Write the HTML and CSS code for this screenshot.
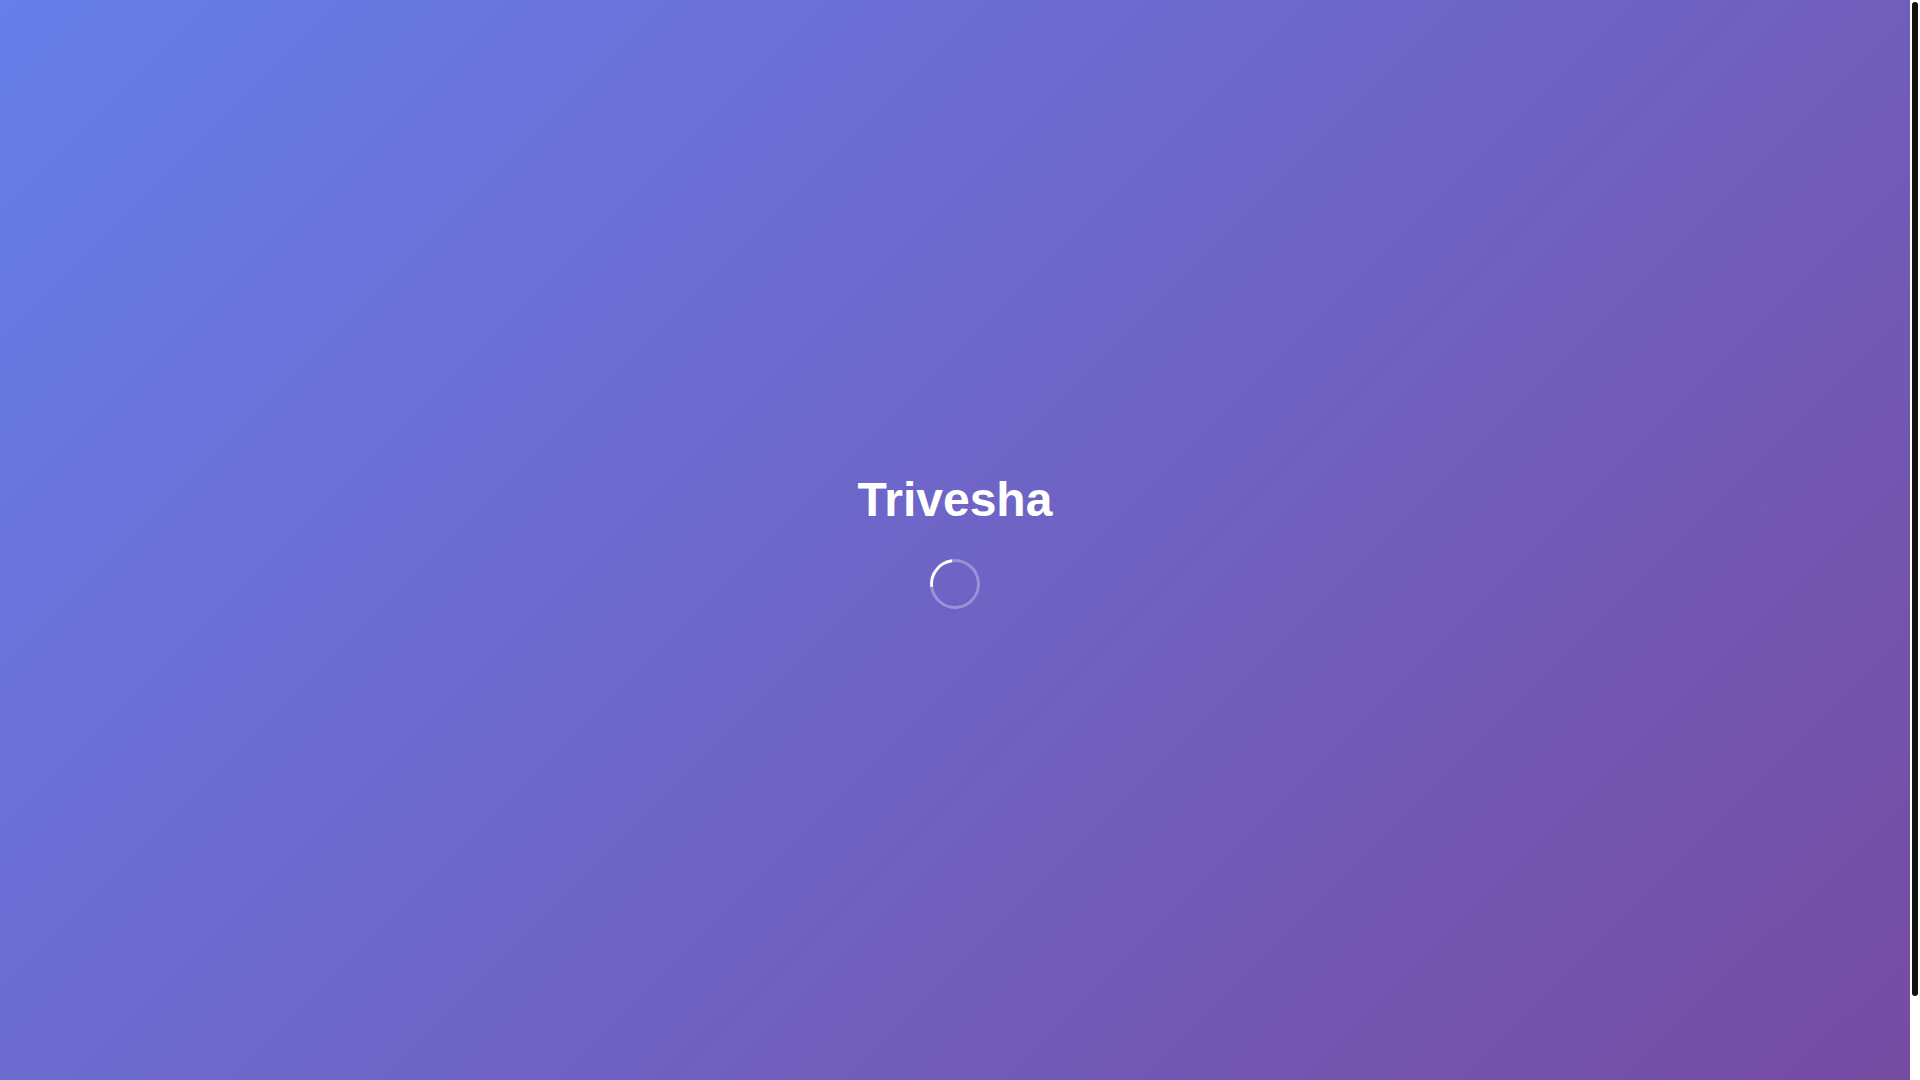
FILE: index.html
```html
<!DOCTYPE html>
<html lang="en">
<head>
<meta charset="utf-8">
<title>Trivesha</title>
<link rel="stylesheet" href="styles.css">
</head>
<body>
<div class="window">
  <main class="loader">
    <div class="loader-inner">
      <h1 class="brand">Trivesha</h1>
      <div class="spinner"></div>
    </div>
  </main>
  <div class="scroll-rail" aria-hidden="true">
    <div class="scroll-thumb"></div>
  </div>
</div>
</body>
</html>
```

FILE: styles.css
```css
html, body {
  margin: 0;
  padding: 0;
  height: 100%;
  overflow: hidden;
}

body {
  font-family: "Liberation Sans", Arial, sans-serif;
  background: #ffffff;
}

.window {
  display: flex;
  height: 100vh;
}

.loader {
  flex: 1;
  background: linear-gradient(135deg, #667eea 0%, #764ba2 100%);
  display: flex;
  align-items: center;
  justify-content: center;
}

.loader-inner {
  display: flex;
  flex-direction: column;
  align-items: center;
}

.brand {
  margin: 0 0 32px 0;
  font-size: 48px;
  font-weight: 700;
  color: #ffffff;
  line-height: normal;
}

.spinner {
  box-sizing: border-box;
  width: 50px;
  height: 50px;
  border: 3px solid rgba(255, 255, 255, 0.3);
  border-top-color: #ffffff;
  border-radius: 50%;
  transform: rotate(-52deg);
}

.scroll-rail {
  width: 10px;
  background: #ffffff;
  padding: 2px;
  box-sizing: border-box;
}

.scroll-thumb {
  height: 994px;
  background: #111111;
  border-radius: 3px;
}
```
